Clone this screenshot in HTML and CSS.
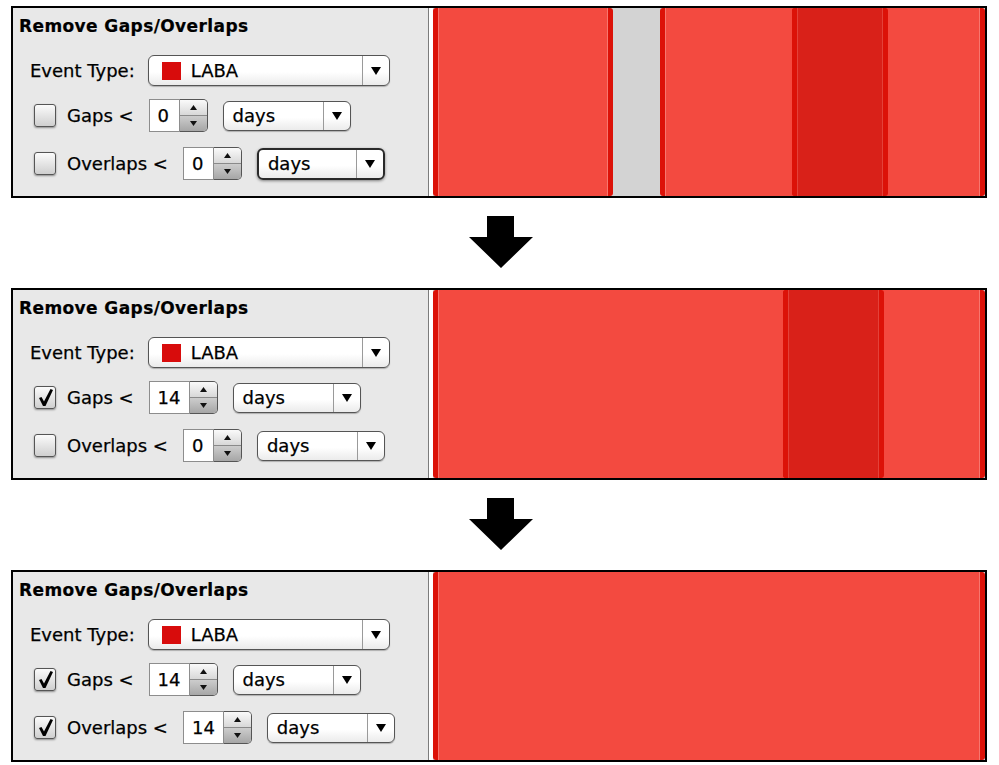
FILE: index.html
```html
<!DOCTYPE html>
<html>
<head>
<meta charset="utf-8">
<title>Remove Gaps/Overlaps</title>
<link rel="stylesheet" href="styles.css">
</head>
<body>
<div class="page">

  <section class="panel">
    <div class="controls">
      <div class="title">Remove Gaps/Overlaps</div>
      <div class="row row-event">
        <span class="label">Event Type:</span>
        <div class="combo event-combo">
          <span class="combo-value"><span class="swatch"></span>LABA</span>
          <span class="combo-btn"><svg width="10" height="8" viewBox="0 0 10 8"><polygon points="0,0 10,0 5,8" fill="#000"/></svg></span>
        </div>
      </div>
      <div class="row row-opt row-gaps">
        <span class="check"></span>
        <span class="label">Gaps &lt;</span>
        <div class="spinner">
          <span class="spin-field">0</span>
          <span class="spin-btn">
            <span class="spin-up"><svg width="7" height="5" viewBox="0 0 7 5"><polygon points="0,5 7,5 3.5,0" fill="#111"/></svg></span>
            <span class="spin-down"><svg width="7" height="5" viewBox="0 0 7 5"><polygon points="0,0 7,0 3.5,5" fill="#111"/></svg></span>
          </span>
        </div>
        <div class="combo unit-combo">
          <span class="combo-value">days</span>
          <span class="combo-btn"><svg width="10" height="8" viewBox="0 0 10 8"><polygon points="0,0 10,0 5,8" fill="#000"/></svg></span>
        </div>
      </div>
      <div class="row row-opt row-overlaps">
        <span class="check"></span>
        <span class="label">Overlaps &lt;</span>
        <div class="spinner">
          <span class="spin-field">0</span>
          <span class="spin-btn">
            <span class="spin-up"><svg width="7" height="5" viewBox="0 0 7 5"><polygon points="0,5 7,5 3.5,0" fill="#111"/></svg></span>
            <span class="spin-down"><svg width="7" height="5" viewBox="0 0 7 5"><polygon points="0,0 7,0 3.5,5" fill="#111"/></svg></span>
          </span>
        </div>
        <div class="combo unit-combo focus">
          <span class="combo-value">days</span>
          <span class="combo-btn"><svg width="10" height="8" viewBox="0 0 10 8"><polygon points="0,0 10,0 5,8" fill="#000"/></svg></span>
        </div>
      </div>
    </div>
    <div class="chart">
      <div class="track">
        <div class="bar" style="left:0px;width:180px"></div>
        <div class="bar" style="left:227px;width:228px"></div>
        <div class="bar" style="left:359px;width:193px"></div>
        <div class="bar dark" style="left:359px;width:96px"></div>
      </div>
    </div>
  </section>

  <div class="arrow"><svg width="64" height="52" viewBox="0 0 64 52"><polygon points="18,0 45,0 45,21 64,21 32,52 0,21 18,21" fill="#000"/></svg></div>

  <section class="panel">
    <div class="controls">
      <div class="title">Remove Gaps/Overlaps</div>
      <div class="row row-event">
        <span class="label">Event Type:</span>
        <div class="combo event-combo">
          <span class="combo-value"><span class="swatch"></span>LABA</span>
          <span class="combo-btn"><svg width="10" height="8" viewBox="0 0 10 8"><polygon points="0,0 10,0 5,8" fill="#000"/></svg></span>
        </div>
      </div>
      <div class="row row-opt row-gaps">
        <span class="check"><svg width="20" height="21" viewBox="0 0 20 21"><polygon points="4,11 6.5,10 9,14.5 15.5,2 18,3 10.5,19 8,19" fill="#000"/></svg></span>
        <span class="label">Gaps &lt;</span>
        <div class="spinner">
          <span class="spin-field">14</span>
          <span class="spin-btn">
            <span class="spin-up"><svg width="7" height="5" viewBox="0 0 7 5"><polygon points="0,5 7,5 3.5,0" fill="#111"/></svg></span>
            <span class="spin-down"><svg width="7" height="5" viewBox="0 0 7 5"><polygon points="0,0 7,0 3.5,5" fill="#111"/></svg></span>
          </span>
        </div>
        <div class="combo unit-combo">
          <span class="combo-value">days</span>
          <span class="combo-btn"><svg width="10" height="8" viewBox="0 0 10 8"><polygon points="0,0 10,0 5,8" fill="#000"/></svg></span>
        </div>
      </div>
      <div class="row row-opt row-overlaps">
        <span class="check"></span>
        <span class="label">Overlaps &lt;</span>
        <div class="spinner">
          <span class="spin-field">0</span>
          <span class="spin-btn">
            <span class="spin-up"><svg width="7" height="5" viewBox="0 0 7 5"><polygon points="0,5 7,5 3.5,0" fill="#111"/></svg></span>
            <span class="spin-down"><svg width="7" height="5" viewBox="0 0 7 5"><polygon points="0,0 7,0 3.5,5" fill="#111"/></svg></span>
          </span>
        </div>
        <div class="combo unit-combo">
          <span class="combo-value">days</span>
          <span class="combo-btn"><svg width="10" height="8" viewBox="0 0 10 8"><polygon points="0,0 10,0 5,8" fill="#000"/></svg></span>
        </div>
      </div>
    </div>
    <div class="chart">
      <div class="track">
        <div class="bar" style="left:0px;width:451px"></div>
        <div class="bar" style="left:350px;width:202px"></div>
        <div class="bar dark" style="left:350px;width:101px"></div>
      </div>
    </div>
  </section>

  <div class="arrow"><svg width="64" height="52" viewBox="0 0 64 52"><polygon points="18,0 45,0 45,21 64,21 32,52 0,21 18,21" fill="#000"/></svg></div>

  <section class="panel">
    <div class="controls">
      <div class="title">Remove Gaps/Overlaps</div>
      <div class="row row-event">
        <span class="label">Event Type:</span>
        <div class="combo event-combo">
          <span class="combo-value"><span class="swatch"></span>LABA</span>
          <span class="combo-btn"><svg width="10" height="8" viewBox="0 0 10 8"><polygon points="0,0 10,0 5,8" fill="#000"/></svg></span>
        </div>
      </div>
      <div class="row row-opt row-gaps">
        <span class="check"><svg width="20" height="21" viewBox="0 0 20 21"><polygon points="4,11 6.5,10 9,14.5 15.5,2 18,3 10.5,19 8,19" fill="#000"/></svg></span>
        <span class="label">Gaps &lt;</span>
        <div class="spinner">
          <span class="spin-field">14</span>
          <span class="spin-btn">
            <span class="spin-up"><svg width="7" height="5" viewBox="0 0 7 5"><polygon points="0,5 7,5 3.5,0" fill="#111"/></svg></span>
            <span class="spin-down"><svg width="7" height="5" viewBox="0 0 7 5"><polygon points="0,0 7,0 3.5,5" fill="#111"/></svg></span>
          </span>
        </div>
        <div class="combo unit-combo">
          <span class="combo-value">days</span>
          <span class="combo-btn"><svg width="10" height="8" viewBox="0 0 10 8"><polygon points="0,0 10,0 5,8" fill="#000"/></svg></span>
        </div>
      </div>
      <div class="row row-opt row-overlaps">
        <span class="check"><svg width="20" height="21" viewBox="0 0 20 21"><polygon points="4,11 6.5,10 9,14.5 15.5,2 18,3 10.5,19 8,19" fill="#000"/></svg></span>
        <span class="label">Overlaps &lt;</span>
        <div class="spinner">
          <span class="spin-field">14</span>
          <span class="spin-btn">
            <span class="spin-up"><svg width="7" height="5" viewBox="0 0 7 5"><polygon points="0,5 7,5 3.5,0" fill="#111"/></svg></span>
            <span class="spin-down"><svg width="7" height="5" viewBox="0 0 7 5"><polygon points="0,0 7,0 3.5,5" fill="#111"/></svg></span>
          </span>
        </div>
        <div class="combo unit-combo">
          <span class="combo-value">days</span>
          <span class="combo-btn"><svg width="10" height="8" viewBox="0 0 10 8"><polygon points="0,0 10,0 5,8" fill="#000"/></svg></span>
        </div>
      </div>
    </div>
    <div class="chart">
      <div class="track">
        <div class="bar" style="left:0px;width:552px"></div>
      </div>
    </div>
  </section>

</div>
</body>
</html>
```

FILE: styles.css
```css
* { box-sizing: border-box; }

body {
  margin: 0;
  background: #fff;
  font-family: "DejaVu Sans", "Noto Sans", sans-serif;
  color: #000;
}

.page {
  display: flex;
  flex-direction: column;
  align-items: flex-start;
  padding: 6px 0 0 11px;
}

.panel {
  width: 976px;
  height: 192px;
  border: 2px solid #000;
  display: flex;
}

.controls {
  width: 416px;
  flex: none;
  background: #e8e8e8;
  border-right: 1px solid #7c7c7c;
  padding: 8px 0 0 6px;
  display: flex;
  flex-direction: column;
}

.title {
  font-weight: bold;
  font-size: 17px;
  letter-spacing: 0.4px;
  line-height: 20px;
  white-space: nowrap;
  -webkit-text-stroke: 0.2px #000;
}

.row {
  display: flex;
  align-items: center;
}

.row-event {
  height: 31px;
  margin: 19px 0 0 11px;
}

.row-opt {
  height: 33px;
  margin-left: 15px;
}

.row-gaps { margin-top: 13px; }
.row-overlaps { margin-top: 15px; }

.label {
  font-size: 18px;
  line-height: 22px;
  white-space: nowrap;
  -webkit-text-stroke: 0.25px #000;
}

.row-event .label { margin-right: 13px; }
.row-opt .label { margin: 0 15px 0 11px; }

/* checkbox */
.check {
  width: 22px;
  height: 23px;
  flex: none;
  border: 1px solid #555;
  border-radius: 3px;
  background: linear-gradient(#fbfbfb, #cfcfcf);
  box-shadow: 0 1px 2px rgba(0, 0, 0, 0.4);
  display: flex;
  align-items: center;
  justify-content: center;
}

/* combo boxes */
.combo {
  display: flex;
  height: 31px;
  flex: none;
  border: 1px solid #555;
  border-radius: 6px;
  background: linear-gradient(#fff 55%, #ebebeb);
  box-shadow: 0 1px 1px rgba(0, 0, 0, 0.25);
}

.combo-value {
  flex: 1;
  display: flex;
  align-items: center;
  font-size: 18px;
  padding-left: 9px;
  white-space: nowrap;
  -webkit-text-stroke: 0.25px #000;
}

.combo-btn {
  width: 27px;
  flex: none;
  border-left: 1px solid #9a9a9a;
  display: flex;
  align-items: center;
  justify-content: center;
}

.event-combo { width: 242px; }
.event-combo .combo-value { padding-left: 13px; }

.swatch {
  width: 19px;
  height: 18px;
  background: #d80c0c;
  margin-right: 10px;
}

.unit-combo {
  width: 128px;
  height: 30px;
}

.unit-combo.focus {
  border: 2px solid #2a2a2a;
  height: 32px;
  box-shadow: 0 1px 3px rgba(0, 0, 0, 0.45);
}

/* spinner */
.spinner {
  display: flex;
  height: 33px;
  flex: none;
  margin-right: 15px;
}

.spin-field {
  min-width: 31px;
  padding: 0 8px;
  border: 1px solid #8d8d8d;
  background: #fff;
  font-size: 18px;
  display: flex;
  align-items: center;
  -webkit-text-stroke: 0.25px #000;
}

.spin-btn {
  width: 28px;
  display: flex;
  flex-direction: column;
  border: 1px solid #555;
  border-left: none;
  border-radius: 0 5px 5px 0;
  overflow: hidden;
}

.spin-up {
  flex: 1;
  background: linear-gradient(#fafafa, #d8d8d8);
  border-bottom: 1px solid #8a8a8a;
  display: flex;
  align-items: center;
  justify-content: center;
}

.spin-down {
  flex: 1;
  background: linear-gradient(#cdcdcd, #a6a6a6);
  display: flex;
  align-items: center;
  justify-content: center;
}

/* chart */
.chart {
  flex: 1;
  background: #fff;
  padding-left: 4px;
  display: flex;
}

.track {
  flex: 1;
  position: relative;
  background: #d3d3d3;
}

.bar {
  position: absolute;
  top: 0;
  bottom: 0;
  background: #f34a40;
  border-left: 5px solid #dc1208;
  border-right: 5px solid #dc1208;
  border-radius: 3px;
  box-shadow: inset 1px 0 0 #f6776f, inset -1px 0 0 #f6776f;
}

.bar.dark {
  background: #d92119;
  box-shadow: inset 1px 0 0 #e3423a, inset -1px 0 0 #e3423a;
}

/* arrows */
.arrow {
  width: 976px;
  display: flex;
  justify-content: center;
  padding: 18px 0 20px 4px;
}

.arrow svg { display: block; }
```
